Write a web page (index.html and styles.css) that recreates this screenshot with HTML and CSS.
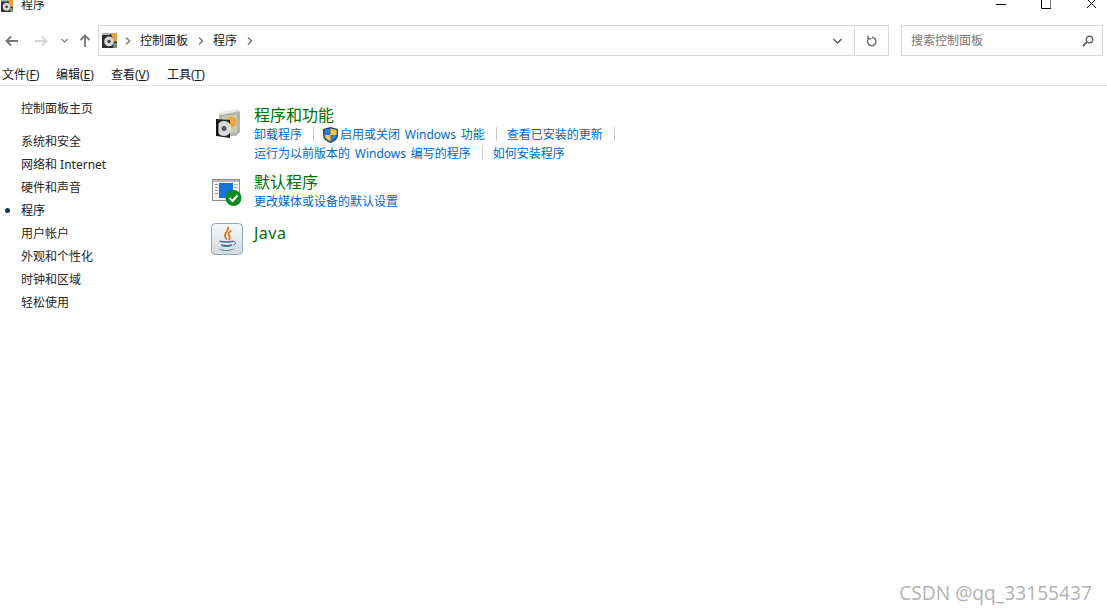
FILE: index.html
```html
<!DOCTYPE html>
<html lang="zh-CN">
<head>
    <meta charset="UTF-8">
    <title>程序</title>
    <link rel="stylesheet" href="styles.css">
</head>
<body>
    <svg class="defs" width="0" height="0">
        <symbol id="disc-icon" viewBox="0 0 16 16">
            <rect x="0" y="0" width="16" height="16" fill="#2e2e2e"/>
            <path d="M9 0h7v9h-3z" fill="#e8a33d"/>
            <path d="M0 0h10l-2 2H0z" fill="#a9b8a8"/>
            <path d="M12 11h4v5h-4z" fill="#6f9a78"/>
            <circle cx="7.500" cy="9" r="5.200" fill="#d8d8d8"/>
            <circle cx="7.500" cy="9" r="1.800" fill="#444"/>
        </symbol>
        <linearGradient id="java-bg" x1="0" y1="0" x2="0" y2="1">
            <stop offset="0" stop-color="#f6f7f8"/>
            <stop offset="1" stop-color="#d5dade"/>
        </linearGradient>
    </svg>

    <div class="titlebar">
        <svg class="title-icon"><use href="#disc-icon"/></svg>
        <span class="title-text">程序</span>
        <div class="window-btns">
            <svg width="10" height="10" viewBox="0 0 10 10"><path d="M0 4.500h10" stroke="#000" fill="none"/></svg>
            <svg width="10" height="10" viewBox="0 0 10 10"><path d="M.5 -2v10.500h9.500V-2" stroke="#000" fill="none"/></svg>
            <svg width="11" height="10" viewBox="0 0 11 10"><path d="M1 -1l9 9M10 -1l-9 9" stroke="#000" fill="none"/></svg>
        </div>
    </div>

    <div class="navbar">
        <div class="nav-btns">
            <svg class="nav-back" width="13" height="12" viewBox="0 0 13 12"><path d="M13 6H1.500M6 1.500L1.500 6 6 10.500" stroke="#777" stroke-width="1.800" fill="none"/></svg>
            <svg class="nav-forward" width="13" height="12" viewBox="0 0 13 12"><path d="M0 6h11.500M7 1.500L11.500 6 7 10.500" stroke="#d4d4d4" stroke-width="1.800" fill="none"/></svg>
            <svg class="nav-drop" width="7" height="5" viewBox="0 0 7 5"><path d="M.5 1l3 3 3-3" stroke="#8a8a8a" stroke-width="1.500" fill="none"/></svg>
            <svg class="nav-up" width="12" height="13" viewBox="0 0 12 13"><path d="M6 13V1.500M1.500 6L6 1.500 10.500 6" stroke="#777" stroke-width="1.800" fill="none"/></svg>
        </div>
        <div class="address">
            <div class="crumbs">
                <svg class="crumb-icon"><use href="#disc-icon"/></svg>
                <svg class="chevron" width="6" height="8" viewBox="0 0 6 8"><path d="M1 .5L4.500 4 1 7.500" stroke="#808080" stroke-width="1.600" fill="none"/></svg>
                <span class="crumb">控制面板</span>
                <svg class="chevron" width="6" height="8" viewBox="0 0 6 8"><path d="M1 .5L4.500 4 1 7.500" stroke="#808080" stroke-width="1.600" fill="none"/></svg>
                <span class="crumb">程序</span>
                <svg class="chevron" width="6" height="8" viewBox="0 0 6 8"><path d="M1 .5L4.500 4 1 7.500" stroke="#808080" stroke-width="1.600" fill="none"/></svg>
            </div>
            <div class="address-drop">
                <svg width="9" height="6" viewBox="0 0 9 6"><path d="M.5 1l4 4 4-4" stroke="#666" stroke-width="1.600" fill="none"/></svg>
            </div>
            <div class="refresh">
                <svg width="11" height="12" viewBox="0 0 11 12"><path d="M6 2.300A4.200 4.200 0 1 1 2.400 4M2 .5v3.300h3.500" stroke="#777" stroke-width="1.500" fill="none"/></svg>
            </div>
        </div>
        <div class="search">
            <span class="search-text">搜索控制面板</span>
            <svg width="12" height="12" viewBox="0 0 12 12"><circle cx="7.500" cy="4.500" r="3.200" stroke="#666" stroke-width="1.400" fill="none"/><path d="M5 7L1 11" stroke="#666" stroke-width="1.800"/></svg>
        </div>
    </div>

    <div class="menubar">
        <span class="menu-item">文件(<u>F</u>)</span>
        <span class="menu-item">编辑(<u>E</u>)</span>
        <span class="menu-item">查看(<u>V</u>)</span>
        <span class="menu-item">工具(<u>T</u>)</span>
    </div>

    <div class="main">
        <div class="sidebar">
            <a class="side-link side-home">控制面板主页</a>
            <a class="side-link">系统和安全</a>
            <a class="side-link">网络和 Internet</a>
            <a class="side-link">硬件和声音</a>
            <a class="side-link active">程序</a>
            <a class="side-link">用户帐户</a>
            <a class="side-link">外观和个性化</a>
            <a class="side-link">时钟和区域</a>
            <a class="side-link">轻松使用</a>
        </div>

        <div class="content">
            <div class="group group-programs">
                <div class="group-icon">
                    <svg width="28" height="30" viewBox="0 0 28 30">
                        <path d="M5 5L24 1l2 2v20l-4 4H6z" fill="#b4b4b0"/>
                        <path d="M5 3L24 0l2 2-19 4z" fill="#e8e8e4"/>
                        <path d="M8 8l15-3v18L8 25z" fill="#c6cdb0"/>
                        <circle cx="17" cy="13" r="5.500" fill="#eda83d"/>
                        <path d="M2 10l14 1v18L2 27z" fill="#262626"/>
                        <circle cx="10" cy="19.500" r="7.500" fill="#d9dbd9"/>
                        <circle cx="10" cy="19.500" r="2.500" fill="#555"/>
                        <path d="M2 10h2.500v17H2z" fill="#161616"/>
                    </svg>
                </div>
                <div class="group-body">
                    <a class="group-title">程序和功能</a>
                    <div class="task-row">
                        <a class="task">卸载程序</a>
                        <a class="task task-shield">
                            <svg width="15" height="16" viewBox="0 0 15 16">
                                <path d="M7.500 0L15 2v6c0 4-3.500 6.500-7.500 8C3.500 14.500 0 12 0 8V2z" fill="#26466e"/>
                                <path d="M7.500 1.500V8H1.300V3z" fill="#2f7fd6"/>
                                <path d="M7.500 1.500L13.700 3v5H7.500z" fill="#f5c542"/>
                                <path d="M7.500 8h6.200c-.3 3-3 5-6.200 6.400z" fill="#2f7fd6"/>
                                <path d="M7.500 8v6.400C4.300 13 1.600 11 1.300 8z" fill="#f5c542"/>
                            </svg>
                            <span>启用或关闭 Windows 功能</span>
                        </a>
                        <a class="task">查看已安装的更新</a>
                    </div>
                    <div class="task-row">
                        <a class="task">运行为以前版本的 Windows 编写的程序</a>
                        <a class="task task-last">如何安装程序</a>
                    </div>
                </div>
            </div>

            <div class="group group-default">
                <div class="group-icon">
                    <svg width="32" height="30" viewBox="0 0 32 30">
                        <rect x="1.500" y="1.500" width="27" height="21" fill="#f4f4f4" stroke="#8d8d8d"/>
                        <path d="M2 2h26v2H2z" fill="#b9b9b9"/>
                        <path d="M4 6h3v1H4zM4 9h3v1H4zM4 12h3v1H4zM4 15h3v1H4z" fill="#9a9a9a"/>
                        <path d="M23 6h4v1h-4zM23 9h4v1h-4z" fill="#b0b0b0"/>
                        <rect x="8" y="5" width="14" height="15" fill="#1673d8"/>
                        <circle cx="22.500" cy="20" r="8" fill="#0d8a25"/>
                        <path d="M18.500 20l3 3 5-5.500" stroke="#fff" stroke-width="2" fill="none"/>
                    </svg>
                </div>
                <div class="group-body">
                    <a class="group-title">默认程序</a>
                    <div class="task-row">
                        <a class="task task-last">更改媒体或设备的默认设置</a>
                    </div>
                </div>
            </div>

            <div class="group group-java">
                <div class="group-icon">
                    <svg width="32" height="32" viewBox="0 0 33 33">
                        <rect x=".5" y=".5" width="32" height="32" rx="4" fill="url(#java-bg)" stroke="#8fa3b3"/>
                        <path d="M17 4c3 4-5 6-2 11 .5 1 1 1.500 1.500 2M21 8c-4 2-3 4-2 6s0 3-1 3" stroke="#e0741c" stroke-width="1.800" fill="none"/>
                        <path d="M9 18c4 1 10 1 14 0v1.500c-4 1-10 1-14 0z" fill="#3e6f8f"/>
                        <path d="M10 22c4 1 8 1 12 0l-1 2c-3 1-7 1-10 0zM7 26c5 2.500 13 2.500 18 0-4 3.500-14 3.500-18 0z" fill="#3e6f8f"/>
                        <path d="M23 19c3 0 3 3 0 4" stroke="#3e6f8f" fill="none"/>
                    </svg>
                </div>
                <div class="group-body">
                    <a class="group-title java-title">Java</a>
                </div>
            </div>
        </div>
    </div>

    <div class="watermark">CSDN @qq_33155437</div>
</body>
</html>
```

FILE: styles.css
```css
html, body {
    height: 100%;
    overflow: hidden;
}
body {
    margin: 0;
    background-color: white;
    font-family: "Noto Sans", "Noto Sans CJK SC", sans-serif;
    font-size: 12px;
    color: #1a1a1a;
}
a {
    cursor: pointer;
}
.defs {
    display: block;
}

/* title bar, cut off at the top of the shot */
.titlebar {
    height: 25px;
    display: flex;
    align-items: flex-start;
    overflow: hidden;
}
.title-icon {
    width: 14px;
    height: 12px;
    margin-right: 7px;
}
.title-text {
    line-height: 9px;
}
.window-btns {
    margin-left: auto;
    display: flex;
    gap: 35px;
    margin-right: 10px;
}

/* back/forward, address and search */
.navbar {
    height: 31px;
    display: flex;
    padding-right: 4px;
}
.nav-btns {
    width: 98px;
    flex-shrink: 0;
    display: flex;
    align-items: center;
    padding-left: 5px;
    box-sizing: border-box;
}
.nav-back {
    margin-right: 17px;
}
.nav-forward {
    margin-right: 13px;
}
.nav-drop {
    margin-right: 11px;
}
.address {
    flex: 1;
    display: flex;
    align-items: stretch;
    border: 1px solid #d9d9d9;
    margin-right: 12px;
}
.crumbs {
    flex: 1;
    display: flex;
    align-items: center;
    padding-left: 3px;
}
.crumb-icon {
    width: 15px;
    height: 17px;
    margin-right: 8px;
}
.crumb {
    margin: 0 10px 2px 9px;
    color: #1a1a1a;
}
.address-drop {
    width: 33px;
    display: flex;
    align-items: center;
    justify-content: center;
}
.refresh {
    width: 33px;
    border-left: 1px solid #d9d9d9;
    display: flex;
    align-items: center;
    justify-content: center;
}
.search {
    width: 202px;
    box-sizing: border-box;
    border: 1px solid #d9d9d9;
    display: flex;
    align-items: center;
    justify-content: space-between;
    padding: 0 8px 0 9px;
}
.search-text {
    color: #777;
    margin-bottom: 2px;
}

.menubar {
    height: 30px;
    box-sizing: border-box;
    border-bottom: 1px solid #e5e5e5;
    display: grid;
    grid-template-columns: 54px 55px 56px auto;
    align-items: center;
    padding: 8px 0 1px 2px;
}

.main {
    display: flex;
}
.sidebar {
    width: 210px;
    flex-shrink: 0;
    padding-top: 11px;
    box-sizing: border-box;
    display: flex;
    flex-direction: column;
}
.side-link {
    height: 23px;
    line-height: 23px;
    padding-left: 21px;
    color: #262626;
    position: relative;
}
.side-home {
    margin-bottom: 10px;
}
.active {
    color: #001040;
}
.active::before {
    content: "";
    position: absolute;
    left: 5px;
    top: 9px;
    width: 5px;
    height: 5px;
    border-radius: 50%;
    background-color: #1a2a5c;
}

.group {
    display: flex;
}
.group-icon {
    width: 44px;
    flex-shrink: 0;
    box-sizing: border-box;
}
.group-title {
    display: block;
    font-size: 16px;
    height: 21px;
    line-height: 23px;
    color: #006f00;
}
.java-title {
    letter-spacing: .5px;
}
.task-row {
    display: flex;
    height: 19px;
    line-height: 19px;
}
.task {
    color: #0066cc;
    display: flex;
    align-items: center;
    position: relative;
    margin-right: 22px;
    word-spacing: 1.6px;
}
.task::after {
    content: "";
    position: absolute;
    right: -12px;
    top: 2px;
    height: 14px;
    border-right: 1px solid #cccccc;
}
.task-last {
    margin-right: 0;
}
.task-last::after {
    display: none;
}
.task-shield svg {
    margin-right: 2px;
    margin-left: -1px;
}
.group-programs {
    margin-top: 18px;
}
.group-programs .group-icon {
    padding-left: 4px;
    padding-top: 5px;
}
.group-default {
    margin-top: 8px;
}
.group-default .group-icon {
    padding-left: 1px;
    padding-top: 7px;
}
.group-java {
    margin-top: 10px;
}
.group-java .group-icon {
    padding-left: 1px;
    padding-top: 1px;
}

.watermark {
    position: absolute;
    right: 15px;
    bottom: 8px;
    font-family: "Open Sans", sans-serif;
    font-size: 19.2px;
    color: #b3b3b3;
}
```
